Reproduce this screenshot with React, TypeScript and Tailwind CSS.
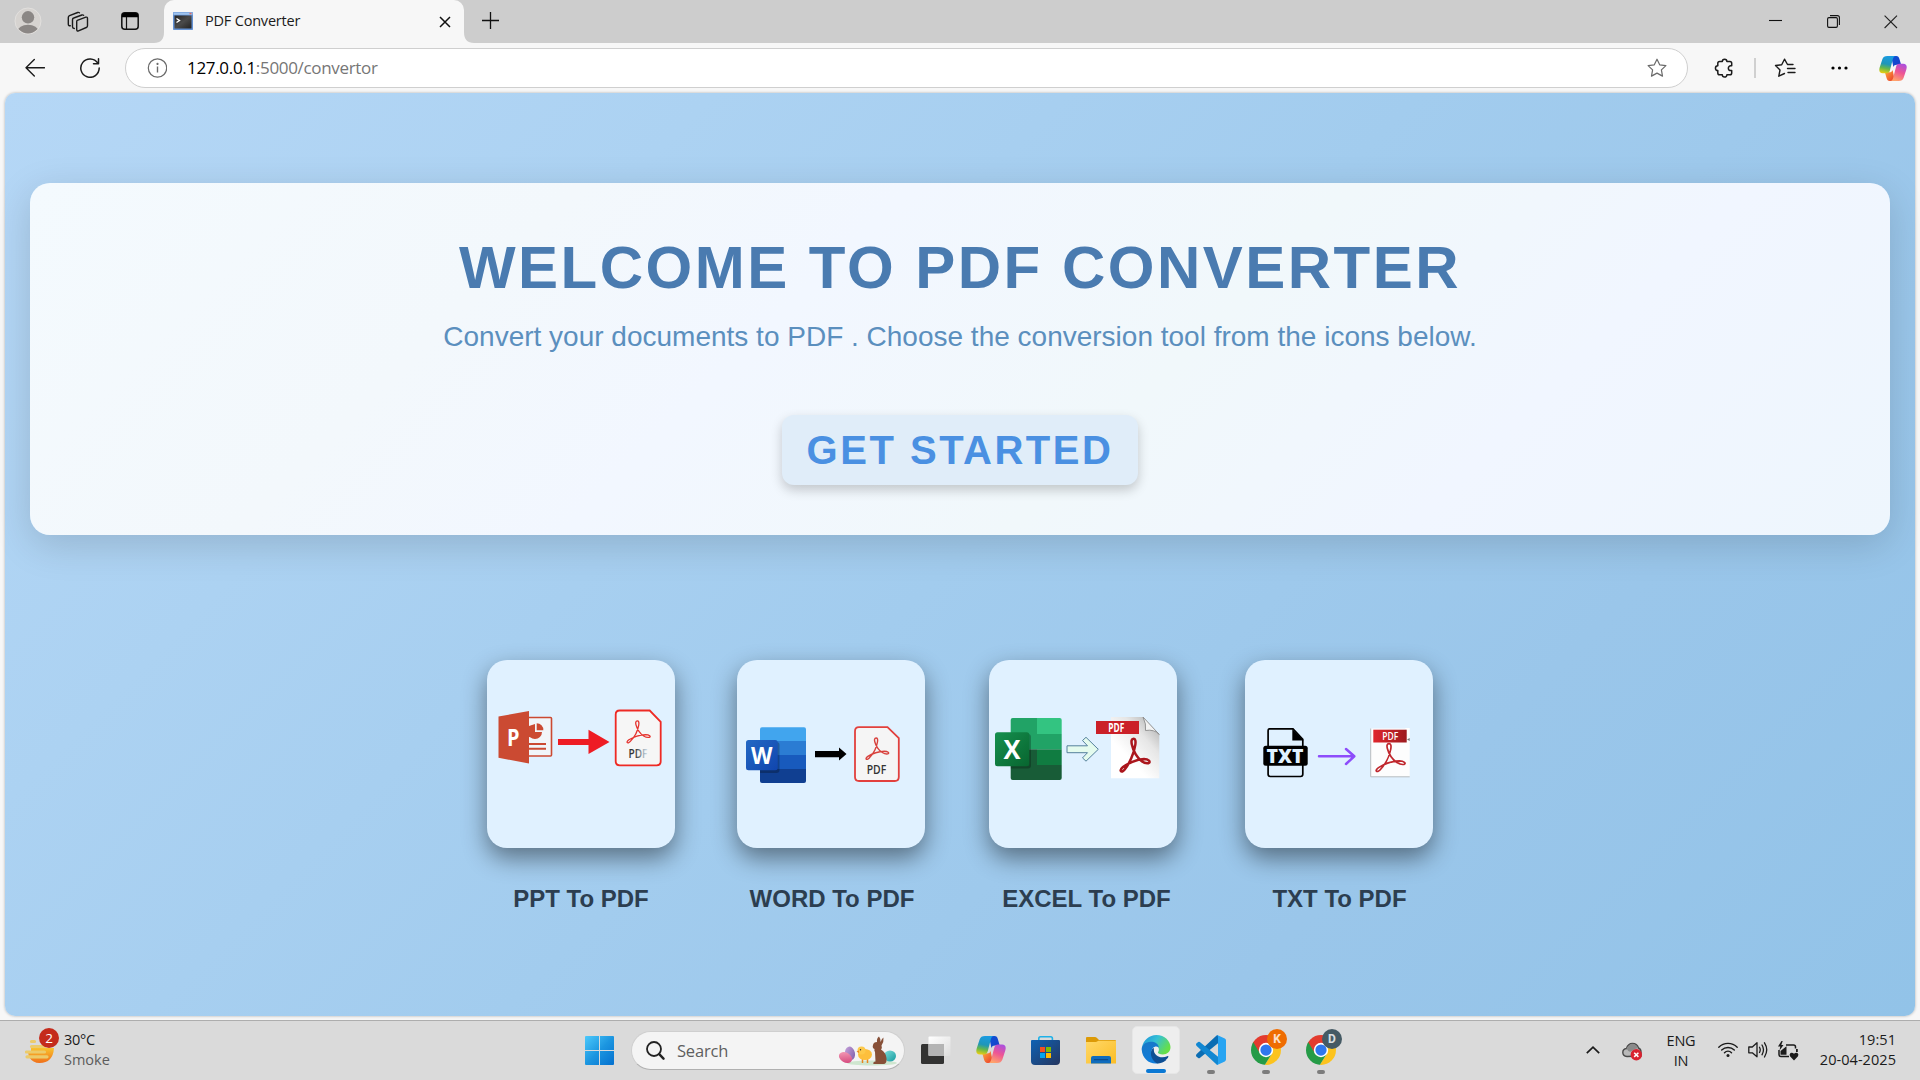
import React from "react";

const ui = "font-['Open_Sans','Noto_Sans',sans-serif]";

function Copilot({ id, className }: { id: string; className: string }) {
  return (
    <svg className={className} viewBox="0 0 30 28">
      <defs>
        <linearGradient id={id + "a"} x1="0.4" y1="0" x2="0.2" y2="1">
          <stop offset="0" stopColor="#1a9be0" />
          <stop offset="0.45" stopColor="#1f96b8" />
          <stop offset="0.7" stopColor="#66b84a" />
          <stop offset="1" stopColor="#f0cf10" />
        </linearGradient>
        <linearGradient id={id + "b"} x1="0.8" y1="0" x2="0.4" y2="1">
          <stop offset="0" stopColor="#a94fe0" />
          <stop offset="0.5" stopColor="#ee5594" />
          <stop offset="1" stopColor="#ffa36b" />
        </linearGradient>
        <linearGradient id={id + "c"} x1="0" y1="0" x2="1" y2="1">
          <stop offset="0" stopColor="#0c52d6" />
          <stop offset="1" stopColor="#1b3fc8" />
        </linearGradient>
        <linearGradient id={id + "d"} x1="0" y1="0" x2="1" y2="1">
          <stop offset="0" stopColor="#ffb03a" />
          <stop offset="1" stopColor="#e8352c" />
        </linearGradient>
      </defs>
      <path d="M13 .5h5.500c2 0 2.800 1.200 3.400 3.200L23.700 10H19c-2 0-3 .8-3.600 2.500z" fill={`url(#${id}c)`} />
      <path d="M17 27.500h-5.500c-2 0-2.800-1.200-3.400-3.200L6.300 18H11c2 0 3-.8 3.600-2.500z" fill={`url(#${id}d)`} />
      <path d="M9 .5h9c-2 0-2.600 1.500-3.200 3.500L11.800 15.500c-.6 2.400-1.800 3.500-3.800 3.500H4C.5 19-.3 16.500.7 13L3.600 4C4.500 1.500 6 .5 9 .5z" fill={`url(#${id}a)`} />
      <path d="M21 27.500h-9c2 0 2.600-1.500 3.200-3.500L18.200 12.500c.6-2.400 1.800-3.500 3.800-3.500h4c3.500 0 4.300 2.500 3.300 6l-2.900 9c-.9 2.500-2.400 3.500-5.400 3.500z" fill={`url(#${id}b)`} />
    </svg>
  );
}

const acrobat =
  "M45 2C31 2 42 32 52 47C62 62 80 76 95 73C104 70 95 61 80 61C55 62 25 74 10 84C-5 95 5 103 15 92C31 75 47 45 51 20C53 8 51 2 45 2Z";

function Acrobat({ x, y, w, h, color, sw }: { x: number; y: number; w: number; h: number; color: string; sw: number }) {
  return (
    <svg x={x} y={y} width={w} height={h} viewBox="0 0 100 100" preserveAspectRatio="none" overflow="visible">
      <path d={acrobat} fill="none" stroke={color} strokeWidth={sw} vectorEffect="non-scaling-stroke" />
    </svg>
  );
}

function PptArt() {
  return (
    <svg className="size-[188px]" viewBox="0 0 188 188">
      <defs>
        <linearGradient id="fadePdf" x1="0" x2="1">
          <stop offset="0.35" stopColor="#333" />
          <stop offset="0.7" stopColor="#8fa0ad" />
          <stop offset="1" stopColor="#d5e3ee" />
        </linearGradient>
      </defs>
      <rect x="40" y="57.500" width="24.500" height="38.500" rx="1" fill="#f1f5f9" stroke="#cb4a32" strokeWidth="1.600" />
      <path d="M42 84h17M42 88.700h17" stroke="#cb4a32" strokeWidth="2" />
      <path d="M48 65a7 7 0 1 0 7 7h-7z" fill="#cb4a32" />
      <path d="M42 66v11l6 1v-14z" fill="#cb4a32" />
      <path d="M49.700 63.300v7h6.600a6.600 6.600 0 0 0-6.600-7z" fill="#cb4a32" />
      <path d="M11.500 56.500 42 51v52.500l-30.500-5.800z" fill="#cb4a32" />
      <text x="20" y="85.500" fontFamily="Open Sans, sans-serif" fontWeight="700" fontSize="23" fill="#fff" textLength="12.500" lengthAdjust="spacingAndGlyphs">P</text>
      <path d="M71 79h30.500v-9.300l21 12.300-21 12v-9H71z" fill="#ee1c24" />
      <path d="M132.700 50.500h30l11 11.300v39.500q0 4-4 4h-37q-4 0-4-4v-46.800q0-4 4-4z" fill="#f6f6f6" stroke="#ee2a24" strokeWidth="1.800" />
      <Acrobat x={139.500} y={60.500} w={24} h={23} color="#e5322d" sw={1.300} />
      <text x="141.500" y="98.200" fontFamily="Open Sans, sans-serif" fontWeight="600" fontSize="12.500" fill="url(#fadePdf)" textLength="19" lengthAdjust="spacingAndGlyphs">PDF</text>
    </svg>
  );
}

function WordArt() {
  return (
    <svg className="size-[188px]" viewBox="0 0 188 188">
      <defs>
        <clipPath id="wordPage"><rect x="23" y="67.300" width="46" height="55.700" rx="2" /></clipPath>
        <linearGradient id="wordBox" x1="0" y1="0" x2="1" y2="1">
          <stop offset="0" stopColor="#2368c4" />
          <stop offset="1" stopColor="#1045ae" />
        </linearGradient>
      </defs>
      <g clipPath="url(#wordPage)">
        <rect x="23" y="67" width="46" height="14" fill="#41a5ee" />
        <rect x="23" y="81" width="46" height="14" fill="#2b7cd3" />
        <rect x="23" y="95" width="46" height="14" fill="#185abd" />
        <rect x="23" y="109" width="46" height="14" fill="#103f91" />
        <rect x="11" y="82" width="31.500" height="31" rx="3" fill="#000" opacity="0.25" />
      </g>
      <rect x="9" y="80" width="31.700" height="30.300" rx="2.500" fill="url(#wordBox)" />
      <text x="14" y="103.700" fontFamily="Open Sans, sans-serif" fontWeight="700" fontSize="23" fill="#fff" textLength="21.500" lengthAdjust="spacingAndGlyphs">W</text>
      <path d="M78 91h24v-3.500l7.500 6.500-7.500 6.500v-3.300H78z" fill="#000" />
      <path d="M122 67.200h28.500l11.300 11v38.800q0 4-4 4h-35.800q-4 0-4-4v-45.800q0-4 4-4z" fill="#f5f5f5" stroke="#e2403d" strokeWidth="1.800" />
      <Acrobat x={128.500} y={77.500} w={23.500} h={22.500} color="#d8413c" sw={1.400} />
      <text x="129.700" y="114.200" fontFamily="Open Sans, sans-serif" fontWeight="600" fontSize="12.500" fill="#333" textLength="19.500" lengthAdjust="spacingAndGlyphs">PDF</text>
    </svg>
  );
}

function ExcelArt() {
  return (
    <svg className="size-[188px]" viewBox="0 0 188 188">
      <defs>
        <clipPath id="excelPage"><rect x="21.700" y="58" width="51" height="62" rx="2" /></clipPath>
        <linearGradient id="excelBox" x1="0" y1="0" x2="1" y2="1">
          <stop offset="0" stopColor="#15904f" />
          <stop offset="1" stopColor="#08652f" />
        </linearGradient>
        <linearGradient id="paper" x1="1" y1="0" x2="0.400" y2="0.700">
          <stop offset="0" stopColor="#a5a5a5" />
          <stop offset="0.500" stopColor="#e6e6e6" />
          <stop offset="1" stopColor="#ffffff" />
        </linearGradient>
      </defs>
      <g clipPath="url(#excelPage)">
        <rect x="21" y="58" width="27" height="31.300" fill="#21a366" />
        <rect x="48" y="58" width="25" height="16" fill="#33c481" />
        <rect x="48" y="74" width="25" height="15.300" fill="#21a366" />
        <rect x="21" y="89.300" width="27" height="15.700" fill="#185c37" />
        <rect x="48" y="89.300" width="25" height="15.700" fill="#107c41" />
        <rect x="21" y="105" width="52" height="15.500" fill="#185c37" />
        <rect x="8" y="74" width="34" height="34.500" rx="3" fill="#000" opacity="0.25" />
      </g>
      <rect x="6" y="72.300" width="34.300" height="34" rx="2.500" fill="url(#excelBox)" />
      <text x="14.500" y="98.700" fontFamily="Open Sans, sans-serif" fontWeight="700" fontSize="26" fill="#fff" textLength="17" lengthAdjust="spacingAndGlyphs">X</text>
      <path d="M78 85.800h20.500l-5-5.300 3.500-3.200L109.300 89.300 97 101.200l-3.500-3.300 5-5.200H78z" fill="#e4fbee" stroke="#55819c" strokeWidth="1" />
      <path d="M122 57h32l16.300 17.500v43.800H122z" fill="url(#paper)" />
      <path d="M154 57q3.500 7 2.500 13.500 9-1.500 13.800 4z" fill="#f2f2f2" stroke="#8b8b8b" strokeWidth="0.900" />
      <rect x="107" y="61" width="43" height="13" fill="#cb2028" />
      <text x="119.300" y="71.800" fontFamily="Open Sans, sans-serif" fontWeight="700" fontSize="11.500" fill="#fff" textLength="16" lengthAdjust="spacingAndGlyphs">PDF</text>
      <Acrobat x={131} y={78} w={30} h={34.500} color="#ab161d" sw={2.500} />
    </svg>
  );
}

function TxtArt() {
  return (
    <svg className="size-[188px]" viewBox="0 0 188 188">
      <defs>
        <linearGradient id="txtRed" x1="0" x2="1">
          <stop offset="0" stopColor="#e0262c" />
          <stop offset="1" stopColor="#9d1b1f" />
        </linearGradient>
      </defs>
      <path d="M24.500 68.800h23.500l9.800 10.500v35q0 2.200-2.200 2.200H25.300q-2.200 0-2.200-2.200V71q0-2.200 1.400-2.200z" fill="none" stroke="#000" strokeWidth="1.700" />
      <path d="M47.300 69v11.500h11.200z" fill="#000" />
      <rect x="18.300" y="85.700" width="44.400" height="20" rx="2.500" fill="#000" />
      <text x="21.500" y="102.500" fontFamily="Open Sans, sans-serif" fontWeight="800" fontSize="19.500" fill="#e0f1ff" textLength="37" lengthAdjust="spacingAndGlyphs">TXT</text>
      <path d="M74 96.300h35M101 89l8.300 7.300L101 104" fill="none" stroke="#8d4dfb" strokeWidth="2.500" strokeLinecap="round" strokeLinejoin="round" />
      <path d="M125.500 68.500H160l4.700 11.500v36.700h-39.200z" fill="#fdfdfd" />
      <path d="M160 68h4.700v12z" fill="#fff" />
      <path d="M162 79.500l2.700 1.500v-3z" fill="#777" />
      <path d="M125.700 68.500v48.300h39" stroke="#b8bcbf" strokeWidth="1" fill="none" />
      <rect x="128.300" y="69.700" width="33.400" height="12.800" fill="url(#txtRed)" />
      <text x="137.300" y="80" fontFamily="Open Sans, sans-serif" fontWeight="600" fontSize="10.500" fill="#fff" textLength="16" lengthAdjust="spacingAndGlyphs">PDF</text>
      <Acrobat x={130.500} y={83} w={30} h={29.300} color="#c0272d" sw={1.700} />
    </svg>
  );
}

const tools = [
  { label: "PPT To PDF", art: <PptArt />, gap: "ml-0", pad: "pl-0" },
  { label: "WORD To PDF", art: <WordArt />, gap: "ml-[62px]", pad: "pl-[2px]" },
  { label: "EXCEL To PDF", art: <ExcelArt />, gap: "ml-[64px]", pad: "pl-[7px]" },
  { label: "TXT To PDF", art: <TxtArt />, gap: "ml-[68px]", pad: "pl-[1px]" },
];

function TabStrip() {
  return (
    <div className="flex h-[43px] shrink-0 items-start bg-[#cdcdcd]">
      <svg className="ml-[14px] mt-[7px] size-7" viewBox="0 0 28 28">
        <defs><clipPath id="avatar"><circle cx="14" cy="14" r="12.500" /></clipPath></defs>
        <circle cx="14" cy="14" r="13" fill="#d6d3d0" stroke="#e2e0de" strokeWidth="1" />
        <circle cx="14" cy="10.300" r="6.200" fill="#8b8785" />
        <ellipse cx="14" cy="24.500" rx="10.500" ry="6.800" fill="#8b8785" clipPath="url(#avatar)" />
      </svg>
      <svg className="ml-[25px] mt-[11px] size-[22px]" viewBox="0 0 22 22" fill="none" stroke="#1b1b1b" strokeWidth="1.400" strokeLinejoin="round" strokeLinecap="round">
        <path d="M10.300 9.300 18.800 6.200q1.700-.5 1.700 1.200v7.400q0 1.200-1.200 1.700L11.500 19.800q-1.800.6-1.800-1.200v-7.800q0-1.200.6-1.500z" />
        <path d="M7.300 17.500q-1.800 0-1.800-1.700V8.700q0-1.300 1.200-1.700l8.200-3q1-.3 1.700.3" />
        <path d="M3.300 14.800Q1.300 15 1.300 13V6.500Q1.300 5.200 2.500 4.700L10.700 1.500q1-.3 1.700.3" />
      </svg>
      <svg className="ml-[32px] mt-[12px] size-[18px]" viewBox="0 0 18 18">
        <rect x="0.800" y="0.800" width="16.400" height="16.400" rx="3" fill="none" stroke="#111" strokeWidth="1.500" />
        <path d="M1 5.300V3q0-2 2-2h12q2 0 2 2v2.300z" fill="#000" />
        <path d="M5.500 5v12" stroke="#111" strokeWidth="1.200" />
      </svg>
      <div className="relative ml-[25px] flex h-[43px] w-[300px] items-start rounded-t-[10px] bg-[#f7f7f7]">
        <svg className="absolute -left-[10px] bottom-0 h-[11px] w-[10px]" viewBox="0 0 10 11"><path d="M10 0v11H0q10 0 10-11z" fill="#f7f7f7" /></svg>
        <svg className="absolute -right-[10px] bottom-0 h-[11px] w-[10px]" viewBox="0 0 10 11"><path d="M0 0v11h10Q0 11 0 0z" fill="#f7f7f7" /></svg>
        <svg className="ml-[9px] mt-[12px] h-[18px] w-5" viewBox="0 0 20 18">
          <defs><linearGradient id="term" x1="0" y1="0" x2="1" y2="1"><stop offset="0" stopColor="#252525" /><stop offset="0.500" stopColor="#4a4a4a" /><stop offset="1" stopColor="#222" /></linearGradient></defs>
          <rect width="20" height="18" rx="0.800" fill="#6492d4" />
          <rect x="0.500" y="0.500" width="19" height="2.300" fill="#9fc3ee" />
          <rect x="16.500" y="0.800" width="2" height="1.500" fill="#e06b62" />
          <rect x="1.500" y="3.500" width="17" height="13" fill="url(#term)" />
          <path d="M3.500 6.500 6.500 8.500 3.500 10.500" fill="none" stroke="#fff" strokeWidth="1.400" />
        </svg>
        <span className={`ml-[12px] mt-[10px] text-[14.500px] leading-[22px] tracking-[-0.2px] text-[#1b1b1b] ${ui}`}>PDF Converter</span>
        <svg className="ml-auto mr-[13.500px] mt-[16px] size-3" viewBox="0 0 12 12"><path d="M1 1l10 10M11 1 1 11" stroke="#111" strokeWidth="1.500" /></svg>
      </div>
      <svg className="ml-[18px] mt-[12px] size-[17px]" viewBox="0 0 17 17"><path d="M8.500 0v17M0 8.500h17" stroke="#111" strokeWidth="1.300" /></svg>
      <svg className="ml-auto mt-[15px] h-[13px] w-[13px]" viewBox="0 0 13 13"><path d="M0 5.500h13" stroke="#111" strokeWidth="1.100" /></svg>
      <svg className="ml-[45px] mt-[15px] size-[13px]" viewBox="0 0 13 13" fill="none" stroke="#111" strokeWidth="1.100">
        <rect x="0.600" y="2.600" width="9.800" height="9.800" rx="1.300" />
        <path d="M3 .6h7.400q2 0 2 2V10" />
      </svg>
      <svg className="ml-[44px] mr-[22px] mt-[15px] size-[14px]" viewBox="0 0 14 14"><path d="M.6.6l12.400 12.400M13 .6.600 13" stroke="#222" strokeWidth="1.100" /></svg>
    </div>
  );
}

const starPath = "M10 1.200 12.700 6.800 18.900 7.600 14.400 11.900 15.500 18.100 10 15.100 4.500 18.100 5.600 11.900 1.100 7.600 7.300 6.800z";

function Toolbar() {
  return (
    <div className="flex h-[50px] shrink-0 items-center bg-[#f7f7f7]">
      <svg className="ml-[25px] size-5" viewBox="0 0 20 20" fill="none" stroke="#1b1b1b" strokeWidth="1.400" strokeLinecap="round" strokeLinejoin="round"><path d="M19.500 9.700H1M9.300 1.500 1 9.700l8.300 8.300" /></svg>
      <svg className="ml-[35px] size-5" viewBox="0 0 20 20" fill="none" stroke="#1b1b1b" strokeWidth="1.500" strokeLinecap="round" strokeLinejoin="round"><path d="M17.800 5.200A9.200 9.200 0 1 0 19.200 10M18.500.8v5h-5" /></svg>
      <div className="ml-[25px] flex h-10 w-[1563px] items-center rounded-full border border-[#cfcfcf] bg-white">
        <svg className="ml-[21px] size-5" viewBox="0 0 20 20" fill="none" stroke="#6a6a6a" strokeWidth="1.200"><circle cx="10.500" cy="10" r="9.200" /><path d="M10.500 8.500v6" strokeWidth="1.400" /><circle cx="10.500" cy="5.900" r="0.500" fill="#6a6a6a" /></svg>
        <span className={`ml-[20px] text-[17px] tracking-[-0.320px] text-[#767676] ${ui}`}><span className="text-black">127.0.0.1</span>:5000/convertor</span>
        <svg className="ml-auto mr-[20px] size-5" viewBox="0 0 20 20"><path d={starPath} fill="none" stroke="#6a6a6a" strokeWidth="1.200" strokeLinejoin="round" /></svg>
      </div>
      <svg className="ml-[26px] size-5" viewBox="0 0 20 20" fill="none" stroke="#1b1b1b" strokeWidth="1.500" strokeLinejoin="round">
        <path d="M8.300 3.500a2.300 2.300 0 0 1 4.600 0h3q1.800 0 1.800 1.800v2.500h-1a2.300 2.300 0 0 0 0 4.700h1V15q0 1.800-1.800 1.800h-3a2.300 2.300 0 0 1-4.600 0H5.600q-1.800 0-1.800-1.800v-2.500a2.300 2.300 0 0 1 0-4.700V5.300q0-1.800 1.800-1.800z" />
      </svg>
      <div className="ml-[20px] h-5 w-[2px] bg-[#d0d0d0]" />
      <svg className="ml-[18px] h-5 w-[22px]" viewBox="0 0 22 20" fill="none" stroke="#1b1b1b" strokeWidth="1.400" strokeLinejoin="round" strokeLinecap="round">
        <path d="M19 6.500h-5.500L10.500 1.200 7.700 6.700 1.500 7.500 6 12l-1.200 6.200 5.700-2.700M13.500 10.500H21M14 14.500h7" />
      </svg>
      <svg className="ml-[35px] h-1 w-[17px]" viewBox="0 0 17 4"><circle cx="2" cy="2" r="1.600" /><circle cx="8.500" cy="2" r="1.600" /><circle cx="15" cy="2" r="1.600" /></svg>
      <Copilot id="cpTop" className="ml-[31px] h-[27px] w-[28px]" />
    </div>
  );
}

function Chrome({ id, letter, badge }: { id: string; letter: string; badge: string }) {
  return (
    <div className="relative flex h-[54px] w-[30px] flex-col items-center">
      <svg className="mt-[9px] size-[30px] shrink-0" viewBox="0 0 48 48">
        <defs><clipPath id={id}><circle cx="24" cy="24" r="24" /></clipPath></defs>
        <g clipPath={`url(#${id})`}>
          <path d="M0 0h48v13H24L14.500 29.500 0 10z" fill="#e33b2e" />
          <path d="M48 13H24l9.500 16.500L22 48h26z" fill="#fcc31e" />
          <path d="M3 10.500 14.500 29.500 33.500 29.500 22 48H0V10z" fill="#259b47" />
        </g>
        <circle cx="24" cy="24" r="11.500" fill="#fff" />
        <circle cx="24" cy="24" r="9" fill="#2f77ee" />
      </svg>
      <div className={`absolute left-[16px] top-[3px] flex size-5 items-center justify-center rounded-full text-[12px] font-bold text-white/80 font-['Roboto',sans-serif] ${badge}`}>{letter}</div>
      <div className="mt-[5px] h-1 w-2 rounded-full bg-[#7c7c7c]" />
    </div>
  );
}

function Taskbar() {
  return (
    <div className={`flex h-[60px] shrink-0 items-start border-t border-[#adadad] bg-[#dadada] text-[#1b1b1b] ${ui}`}>
      <div className="relative ml-[25px] mt-[17px] h-[26px] w-[34px]">
        <svg className="h-[26px] w-[30px]" viewBox="0 0 30 26">
          <defs><linearGradient id="sun" x1="0" y1="0" x2="0" y2="1"><stop offset="0" stopColor="#f9c22e" /><stop offset="1" stopColor="#f0701a" /></linearGradient></defs>
          <path d="M3 14h3V10h23q-1 15-14.500 15Q8 25 4 19z" fill="url(#sun)" />
          <path d="M6.500 3.500h3M6.500 8.500h13M1.500 14h18M2 18.800h20" stroke="#eccb6a" strokeWidth="3.200" strokeLinecap="round" />
        </svg>
        <div className="absolute left-[14px] -top-[10px] flex size-5 items-center justify-center rounded-full bg-[#c42b1c] text-[13.500px] text-white">2</div>
      </div>
      <div className="ml-[5px] mt-[9px] w-[61px] text-[14.500px] leading-5 tracking-[-0.3px]">
        <div>30°C</div>
        <div className="tracking-[0px] text-[#5c5c5c]">Smoke</div>
      </div>
      <svg className="ml-[460px] mt-[15px] size-[29px]" viewBox="0 0 29 29">
        <defs><linearGradient id="win" x1="0" y1="0" x2="1" y2="1"><stop offset="0" stopColor="#4cc9fb" /><stop offset="0.500" stopColor="#1c96e0" /><stop offset="1" stopColor="#0470cf" /></linearGradient></defs>
        <path d="M1 0h13v14H0V1q0-1 1-1zM15 0h13q1 0 1 1v13H15zM0 15h14v14H1q-1 0-1-1zM15 15h14v13q0 1-1 1H15z" fill="url(#win)" />
      </svg>
      <div className="ml-[17px] mt-[10px] flex h-[39px] w-[274px] items-center rounded-full border border-[#cfcfcf] border-b-[#b0b0b0] bg-[#f4f4f4]">
        <svg className="ml-[14px] size-[19px]" viewBox="0 0 19 19" fill="none" stroke="#222" strokeLinecap="round"><circle cx="8" cy="8" r="7" strokeWidth="1.800" /><path d="m13.200 13.200 4.300 4.500" strokeWidth="2.400" /></svg>
        <span className="ml-[12px] mt-px text-[16.500px] tracking-[-0.2px] text-[#5f5f5f]">Search</span>
        <svg className="ml-auto mr-[7px] h-[30px] w-[59px]" viewBox="0 0 59 30">
          <defs>
            <linearGradient id="eggA" x1="0" y1="0" x2="1" y2="1"><stop offset="0" stopColor="#f8a7be" /><stop offset="1" stopColor="#cf3b74" /></linearGradient>
            <linearGradient id="eggB" x1="0" y1="0" x2="1" y2="1"><stop offset="0" stopColor="#c9a4dd" /><stop offset="1" stopColor="#7b5ba6" /></linearGradient>
            <linearGradient id="eggC" x1="0" y1="0" x2="1" y2="1"><stop offset="0" stopColor="#7fe0dc" /><stop offset="1" stopColor="#159a9f" /></linearGradient>
          </defs>
          <ellipse cx="34" cy="27" rx="25" ry="2.500" fill="#cfe6cf" />
          <ellipse cx="12" cy="17.500" rx="5" ry="7" fill="url(#eggB)" transform="rotate(-12 12 17.500)" />
          <ellipse cx="7.500" cy="21.500" rx="7" ry="5" fill="url(#eggA)" transform="rotate(30 7.500 21.500)" />
          <ellipse cx="52" cy="20" rx="6" ry="5.500" fill="url(#eggC)" />
          <path d="M24.500 23v4M29.500 23v4" stroke="#e9861f" strokeWidth="1.500" />
          <ellipse cx="27" cy="18.500" rx="7" ry="5.500" fill="#fdbf3c" />
          <circle cx="23.500" cy="14.500" r="4" fill="#fdc94a" />
          <path d="M18.500 15.500l2.500-1v2.500z" fill="#e9861f" /><circle cx="22.500" cy="13.800" r="0.700" fill="#333" />
          <path d="M35 9q.5-3 4-3Q38.500 2 41 .5 43 3 42.500 6 44 2 45.500 1.500 46 6 43.500 9.500q1 3-.5 4 5 3 5.500 8.500.5 6-3 6H35.500q-1-2 2-2.500L37 16q-1-1-.5-3Q34 12 35 9z" fill="#875038" />
        </svg>
      </div>
      <svg className="ml-[16px] mt-[15px] h-[29px] w-[30px]" viewBox="0 0 30 29">
        <defs><linearGradient id="tv" x1="0" y1="0" x2="1" y2="1"><stop offset="0" stopColor="#fff" /><stop offset="1" stopColor="#ddd" /></linearGradient></defs>
        <rect y="8" width="23" height="20" rx="1.500" fill="#333332" />
        <rect x="7.500" y="0.500" width="22" height="19.500" rx="1" fill="url(#tv)" />
        <path d="M7.500 8H23v12H8.500q-1 0-1-1z" fill="#b4b4b4" />
      </svg>
      <Copilot id="cpBar" className="ml-[25px] mt-[14px] h-[29px] w-[30px]" />
      <svg className="ml-[25px] mt-[15px] size-[29px]" viewBox="0 0 29 29">
        <defs><linearGradient id="store" x1="0" y1="0" x2="1" y2="1"><stop offset="0" stopColor="#0e62b4" /><stop offset="1" stopColor="#26365f" /></linearGradient></defs>
        <path d="M7.800 6V2.500Q7.800.8 9.500.8h10.200q1.700 0 1.700 1.700V6" fill="none" stroke="#1fb1e8" strokeWidth="1.600" />
        <path d="M1 4h27q1 0 1 1v20q0 4-4 4H4q-4 0-4-4V5q0-1 1-1z" fill="url(#store)" />
        <path d="M9 11h5v5H9z" fill="#f25022" /><path d="M15 11h5v5h-5z" fill="#7fba00" /><path d="M9 17h5v5H9z" fill="#00a4ef" /><path d="M15 17h5v5h-5z" fill="#ffb900" />
      </svg>
      <svg className="ml-[26px] mt-[16px] h-[27px] w-[30px]" viewBox="0 0 30 27">
        <defs><linearGradient id="fold" x1="0" y1="0" x2="1" y2="1"><stop offset="0" stopColor="#ffd869" /><stop offset="1" stopColor="#fbbd25" /></linearGradient></defs>
        <path d="M0 1q0-1 1-1h8q1 0 2 1l2 2h16q1 0 1 1v4H0z" fill="#dc9a07" />
        <path d="M0 5h10l2.500-1.300H30V26.500H0z" fill="url(#fold)" />
        <path d="M5 26.500V21q0-2 2-2h16q2 0 2 2v5.500z" fill="#0f6cbd" />
        <path d="M8.500 22.700h13" stroke="#0b4a8c" strokeWidth="1.300" strokeLinecap="round" />
      </svg>
      <div className="ml-[16px] mt-[5px] flex h-12 w-12 flex-col items-center rounded-[5px] border border-[#e6e6e6] bg-[#eeeeee]">
        <svg className="mt-[8px] size-[30px]" viewBox="0 0 30 30">
          <defs>
            <linearGradient id="e1" x1="0" y1="0" x2="1" y2="0.500"><stop offset="0" stopColor="#1b8edb" /><stop offset="0.500" stopColor="#35c1d5" /><stop offset="1" stopColor="#66df48" /></linearGradient>
            <linearGradient id="e2" x1="0.300" y1="0" x2="0.700" y2="1"><stop offset="0" stopColor="#1878c8" /><stop offset="1" stopColor="#0f7ddc" /></linearGradient>
          </defs>
          <path d="M0.500 13C2 5 8 0 15.500 0 24 0 30 6.500 30 12.500c0 5-3.500 7.700-8 7.700-3 0-5-1-5-2 0-.8 1-1.200 1-3.200 0-3-2.700-5-6.500-5C6 9.500 2.500 10.500.5 13z" fill="url(#e1)" />
          <path d="M.2 15C0 11 4 7 9.500 7c4.500 0 8 2 8.500 6-4-3-9 1-7 7 1.500 4.500 5.500 7 9 8.500C11 32 1 26.500.2 15z" fill="url(#e2)" />
          <path d="M12.500 13.500C9 16 10 23 15 26.500c3 2 6 2 9.500-.2 1.500-1 2.600-2.300 3.200-3.500.4-.8-.3-1.200-1-.8-6 2.700-14.500.5-14.200-8.500z" fill="#0e4f94" />
          <path d="M12.500 13.500C8 17 9 25 16 29.500c4 0 7.500-1.500 10-4-6 2.500-13-1-13.500-7z" fill="#0e4f94" />
        </svg>
        <div className="mt-[5px] h-1 w-5 shrink-0 rounded-full bg-[#0a78d4]" />
      </div>
      <div className="ml-[16px] flex w-[30px] flex-col items-center">
        <svg className="mt-[14px] size-[30px]" viewBox="0 0 30 30">
          <path d="M0 20.500q0 .7.600 1.200l1.600 1.400q.8.500 1.600 0L22 8.200V0q-1 0-1.700.8L.7 19q-.7.700-.7 1.500z" fill="#0b6db3" />
          <path d="M0 9.500q0-.7.600-1.200l1.600-1.400q.8-.5 1.600 0L22 21.800V30q-1 0-1.700-.8L.7 11q-.7-.7-.7-1.500z" fill="#1187d2" />
          <path d="M21.700.3 28.800 3.600q1.200.6 1.200 1.900v19q0 1.300-1.200 1.900l-7.100 3.300q-1 .4-1.700-.4 2 .5 2-1.500V2.200q0-2-2-1.500.7-.8 1.700-.4z" fill="#27a4f2" />
        </svg>
        <div className="mt-[5px] h-1 w-2 rounded-full bg-[#7c7c7c]" />
      </div>
      <div className="ml-[25px] mt-[5px]"><Chrome id="ch1" letter="K" badge="bg-[#ef6c00]" /></div>
      <div className="ml-[25px] mt-[5px]"><Chrome id="ch2" letter="D" badge="bg-[#455a64]" /></div>
      <svg className="ml-auto mt-[25px] h-[8px] w-[14px]" viewBox="0 0 14 8"><path d="m.8 7.200 6.200-6 6.200 6" fill="none" stroke="#1b1b1b" strokeWidth="1.700" /></svg>
      <svg className="ml-[22px] mt-[21px] h-[19px] w-[20px]" viewBox="0 0 20 19">
        <path d="M5 14.500Q.8 14 .8 10.500.8 7 4.500 6.500 6 1.500 10.500 1.500q4.500 0 6 4.500 2.500 1 2.500 4v4z" fill="#b9b9b9" stroke="#4a4a4a" strokeWidth="1.400" />
        <path d="M4.500 6.500Q7 2 10.500 1.800q4 0 5.500 4.500-3 0-6 2.500T4.500 6.500z" fill="#8a8a8a" />
        <circle cx="14.300" cy="12.800" r="5.700" fill="#d9222f" />
        <path d="m12.200 10.700 4.200 4.200m0-4.200-4.200 4.200" stroke="#fff" strokeWidth="1.500" />
      </svg>
      <div className="ml-[17px] mt-[10px] w-[44px] text-center text-[14.500px] leading-5 tracking-[-0.2px]">ENG<br />IN</div>
      <svg className="ml-[15px] mt-[20px] h-[17px] w-[20px]" viewBox="0 0 20 17" fill="none" stroke="#1b1b1b" strokeWidth="1.400" strokeLinecap="round">
        <path d="M.8 6.200a13 13 0 0 1 18.400 0M3.700 9a9 9 0 0 1 12.600 0M6.500 11.700a5 5 0 0 1 7 0" /><circle cx="10" cy="14.500" r="1.500" fill="#1b1b1b" stroke="none" />
      </svg>
      <svg className="ml-[10px] mt-[20px] h-[18px] w-[20px]" viewBox="0 0 20 18" fill="none" stroke="#1b1b1b" strokeWidth="1.300" strokeLinejoin="round" strokeLinecap="round">
        <path d="M.8 6h3.500L9 1.800v14L4.300 11.800H.8zM11.500 6.200q1.500 2.600 0 5.300M14 4q3 4.800 0 9.800M16.500 1.800q4.500 7 0 14.200" />
      </svg>
      <svg className="ml-[10px] mt-[20px] h-5 w-[21px]" viewBox="0 0 21 20">
        <path d="M8 4h7.500q2 0 2 2v1.500M1 9v4.500q0 2 2 2h8" fill="none" stroke="#1b1b1b" strokeWidth="1.500" />
        <path d="M2.500 13.800V10L8.500 5.300v8.500zM3.500 0 0 5.500h2.300L1.500 9.500 5.500 4H3.300L4.700 0z" fill="#1b1b1b" />
        <path d="M18 8h1.800v3H18z" fill="#1b1b1b" />
        <path d="M16 19.500 12 15.300q-1-2 .5-3.300 1.800-1 3.500.8 1.700-1.800 3.500-.8 1.500 1.300.5 3.300z" fill="#1b1b1b" />
      </svg>
      <div className="mr-[24px] mt-[9px] w-[97px] text-right text-[14.500px] leading-5 tracking-[0.050px]">19:51<br />20-04-2025</div>
    </div>
  );
}

export default function App() {
  return (
    <div className="flex h-[1080px] w-[1920px] flex-col overflow-hidden bg-[#f7f7f7]">
      <TabStrip />
      <Toolbar />
      <main className="mx-[5px] mb-1 flex flex-1 flex-col items-center rounded-[10px] bg-[linear-gradient(135deg,#b5d7f6_0%,#acd2f2_25%,#a2ccee_50%,#9ac6ea_75%,#92c3e8_100%)] font-['Liberation_Sans',Arial,sans-serif] shadow-[0_0_3px_rgba(0,0,0,0.3)]">
        <section className="mt-[90px] flex h-[352px] w-[1860px] flex-col items-center rounded-[20px] bg-[linear-gradient(135deg,#f4fafe_0%,#f3f8fc_25%,#f2f7ff_40%,#f1f8fb_60%,#f1f6ff_78%,#eef6fd_100%)] shadow-[0_10px_38px_rgba(0,0,0,0.15)]">
          <h1 className="mt-[51px] text-[60px] font-bold leading-[68px] tracking-[2.500px] whitespace-nowrap text-[#4a7bb0]">WELCOME TO PDF CONVERTER</h1>
          <p className="mt-[19px] text-[28px] leading-8 whitespace-nowrap text-[#5b8fbe]">Convert your documents to PDF . Choose the conversion tool from the icons below.</p>
          <button className="mt-[62px] h-[70px] w-[356px] rounded-[12px] bg-[#e0edf9] text-[40px] font-bold leading-[70px] tracking-[2.500px] whitespace-nowrap text-[#4a90e2] shadow-[0_5px_12px_rgba(0,0,0,0.2)]">GET STARTED</button>
        </section>
        <section className="mt-[125px] flex w-[946px]">
          {tools.map((t) => (
            <div key={t.label} className={`w-[188px] shrink-0 ${t.gap}`}>
              <div className="size-[188px] rounded-[20px] bg-[#e0f1ff] shadow-[0_10px_25px_rgba(0,0,0,0.45)]">{t.art}</div>
              <div className={`mt-[37px] text-center text-[24px] font-bold leading-7 whitespace-nowrap text-[#2c3e50] ${t.pad}`}>{t.label}</div>
            </div>
          ))}
        </section>
      </main>
      <Taskbar />
    </div>
  );
}
